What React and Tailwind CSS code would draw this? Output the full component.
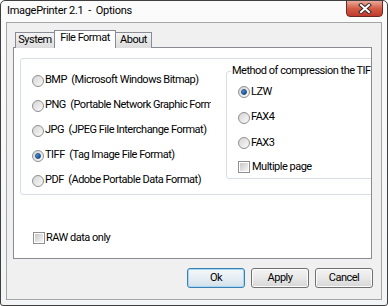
import { useState } from 'react';

const font = { fontFamily: 'Roboto, "Noto Sans", Arial, sans-serif' };

function Radio({ checked }) {
  return (
    <span className="w-[12px] h-[12px] shrink-0 rounded-full border border-[#8f8f8f] bg-gradient-to-br from-[#d5d5d5] to-[#fafafa] flex items-center justify-center">
      {checked && (
        <span className="w-[6px] h-[6px] rounded-full bg-gradient-to-br from-[#5fa8e8] to-[#0f3f7a] border border-[#1c4f86]" />
      )}
    </span>
  );
}

function Check() {
  return (
    <span className="w-[12px] h-[12px] shrink-0 border border-[#8f8f8f] bg-white flex items-center justify-center">
      <span className="w-[8px] h-[8px] bg-gradient-to-br from-[#c8c8c8] to-[#f6f6f6]" />
    </span>
  );
}

function Btn({ children, primary }) {
  return (
    <button
      className={`w-[58px] h-[20px] rounded-[3px] border text-black flex items-center justify-center bg-gradient-to-b ${
        primary
          ? 'border-[#3c7fb1] from-[#f4f8fb] via-[#e6eef4] to-[#d3dfe8] shadow-[inset_0_0_0_1px_#a6d6f5]'
          : 'border-[#707070] from-[#f4f4f4] via-[#e8e8e8] to-[#d6d6d6] shadow-[inset_0_0_0_1px_#fcfcfc]'
      }`}
    >
      {children}
    </button>
  );
}

export default function App() {
  const [format, setFormat] = useState('TIFF');
  const [method, setMethod] = useState('LZW');

  const formats = [
    ['BMP', 'BMP  (Microsoft Windows Bitmap)'],
    ['PNG', 'PNG  (Portable Network Graphic Format)'],
    ['JPG', 'JPG  (JPEG File Interchange Format)'],
    ['TIFF', 'TIFF  (Tag Image File Format)'],
    ['PDF', 'PDF  (Adobe Portable Data Format)'],
  ];

  return (
    <div
      className="w-[388px] h-[306px] bg-gradient-to-b from-[#fbfbfb] to-[#f3f4f6] border border-[#3f3f3f] rounded-t-[5px] rounded-b-[3px] flex flex-col text-[11px] tracking-[-0.5px] text-black overflow-hidden whitespace-nowrap"
      style={font}
    >
      {/* title bar */}
      <div className="h-[21px] relative flex items-center pl-[6px]">
        <span className="whitespace-pre text-[11px] tracking-[-0.3px] text-black">ImagePrinter 2.1  -  Options</span>
        <div className="absolute top-[-1px] right-[4px] w-[37px] h-[17px] rounded-b-[4px] border border-[#6b2a22] bg-gradient-to-b from-[#e9a99b] via-[#d45c45] to-[#c0392b] flex items-center justify-center">
          <svg width="14" height="11" viewBox="0 0 14 11">
            <path d="M3 2 L11 9 M11 2 L3 9" stroke="#3a2a2a" strokeWidth="4" strokeLinecap="square" />
            <path d="M3 2 L11 9 M11 2 L3 9" stroke="#ffffff" strokeWidth="2" strokeLinecap="square" />
          </svg>
        </div>
      </div>

      {/* client */}
      <div className="flex-1 mx-[5px] mb-[5px] border border-[#a5a5a5] bg-[#f0f0f0] flex flex-col pl-[6px] pr-[9px] pt-[7px]">
        {/* tabs */}
        <div className="flex items-end -mb-px pl-[2px] relative z-10">
          <div className="w-[40px] h-[16px] border border-b-0 border-[#898c95] bg-gradient-to-b from-[#f3f3f3] to-[#dcdcdc] flex items-center justify-center">
            System
          </div>
          <div className="w-[62px] h-[18px] -ml-px border border-b-0 border-[#898c95] bg-white flex items-center justify-center pb-[2px]">
            File Format
          </div>
          <div className="w-[37px] h-[16px] -ml-px border border-b-0 border-[#898c95] bg-gradient-to-b from-[#f3f3f3] to-[#dcdcdc] flex items-center justify-center">
            About
          </div>
        </div>

        {/* panel */}
        <div className="h-[212px] border border-[#898c95] bg-white overflow-hidden flex flex-col pl-[6px] pt-[10px]">
          <div className="w-[360px] h-[137px] shrink-0 border border-[#d5dfe5] rounded-[3px] flex pl-[11px] pt-[9px]">
            <div className="w-[179px] shrink-0 overflow-hidden flex flex-col">
              {formats.map(([key, label]) => (
                <label
                  key={key}
                  className="h-[25px] flex items-center gap-[1px] whitespace-pre cursor-default"
                  onClick={() => setFormat(key)}
                >
                  <Radio checked={format === key} />
                  <span>{label}</span>
                </label>
              ))}
            </div>

            <div className="ml-[15px] mt-[3px] w-[200px] h-[108px] shrink-0 border border-[#d5dfe5] rounded-[3px] relative flex flex-col pl-[11px] pt-[7px]">
              <span className="absolute -top-[8px] left-[4px] bg-white px-[1px] leading-[14px]">
                Method of compression the TIFF
              </span>
              {['LZW', 'FAX4', 'FAX3'].map((m) => (
                <label
                  key={m}
                  className="h-[26px] flex items-center gap-[1px] cursor-default"
                  onClick={() => setMethod(m)}
                >
                  <Radio checked={method === m} />
                  <span>{m}</span>
                </label>
              ))}
              <label className="h-[22px] flex items-center gap-[2px]">
                <Check />
                <span>Multiple page</span>
              </label>
            </div>
          </div>

          <label className="mt-[33px] h-[20px] pl-[13px] flex items-center gap-[1px]">
            <Check />
            <span>RAW data only</span>
          </label>
        </div>

        {/* buttons */}
        <div className="mt-[9px] flex justify-end gap-[6px] -mr-[1px]">
          <Btn primary>Ok</Btn>
          <Btn>Apply</Btn>
          <Btn>Cancel</Btn>
        </div>
      </div>
    </div>
  );
}
